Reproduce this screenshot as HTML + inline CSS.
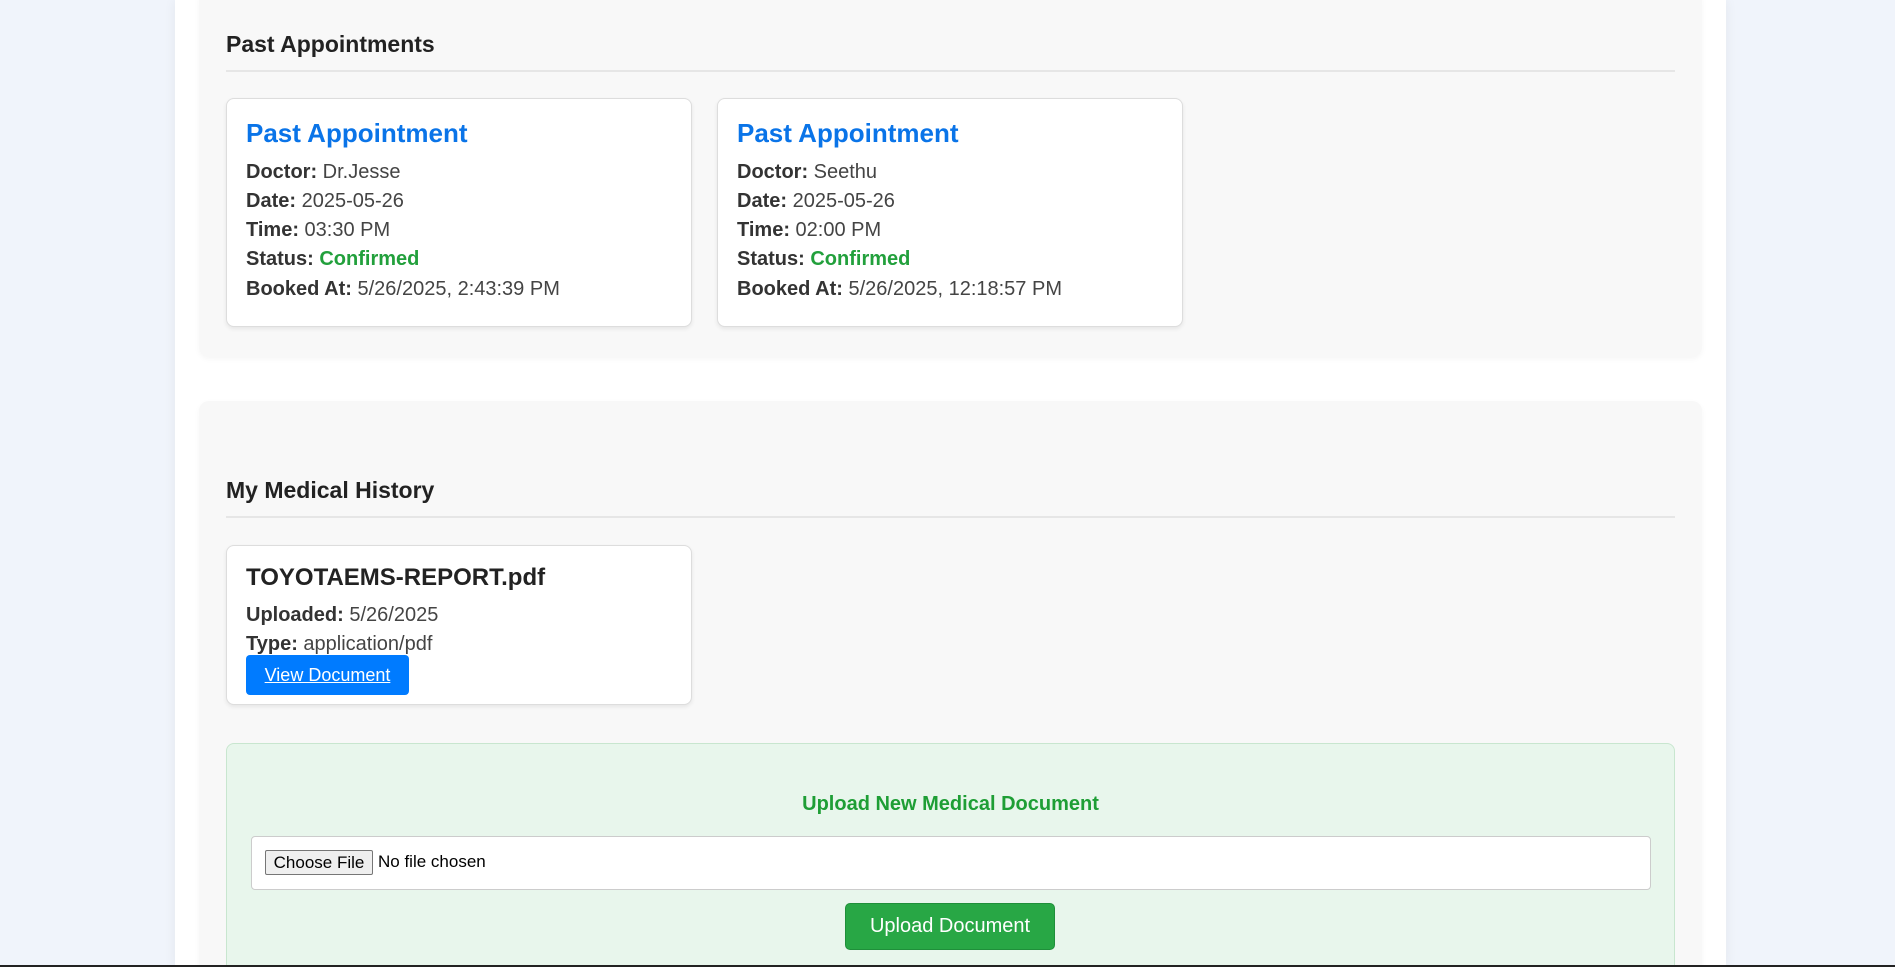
<!DOCTYPE html>
<html style="overflow:hidden"><head><meta charset="utf-8"><style>
*{box-sizing:border-box;margin:0;padding:0}
html,body{width:1895px;height:967px;overflow:hidden}
body{background:#f0f4fb;font-family:"Liberation Sans",Arial,sans-serif}
#w{position:relative;width:1895px;height:967px;overflow:hidden}
.abs{position:absolute}
.container{left:175px;top:0;width:1551px;height:967px;background:#fff;box-shadow:0 0 12px rgba(0,0,0,0.06)}
.panel{left:199px;width:1503px;background:#f8f8f8;border-radius:10px;box-shadow:0 2px 6px rgba(0,0,0,0.04)}
h2{position:absolute;left:226px;font-size:23px;font-weight:bold;color:#222}
.rule{left:226px;width:1449px;height:2px;background:#e6e6e6}
.card{background:#fff;border:1px solid #ddd;border-radius:8px;box-shadow:0 2px 4px rgba(0,0,0,0.08)}
.ct{position:absolute;left:19px;font-size:26px;font-weight:bold;color:#0a74e8}
.ln{position:absolute;left:19px;font-size:20px;color:#444;white-space:nowrap}
.ln b{color:#333}
.g{color:#22a03c;font-weight:bold}
</style></head><body><div id="w">
<div class="abs container"></div>
<div class="abs panel" style="top:-10px;height:367px"></div>
<div class="abs panel" style="top:401px;height:580px"></div>
<h2 style="top:31px">Past Appointments</h2>
<div class="abs rule" style="top:70px"></div>

<div class="abs card" style="left:226px;top:98px;width:466px;height:229px">
<div class="ct" style="top:19px">Past Appointment</div>
<div class="ln" style="top:62px"><b>Doctor:</b> Dr.Jesse</div>
<div class="ln" style="top:91px"><b>Date:</b> 2025-05-26</div>
<div class="ln" style="top:120px"><b>Time:</b> 03:30 PM</div>
<div class="ln" style="top:149px"><b>Status:</b> <span class="g">Confirmed</span></div>
<div class="ln" style="top:179px"><b>Booked At:</b> 5/26/2025, 2:43:39 PM</div>
</div>
<div class="abs card" style="left:717px;top:98px;width:466px;height:229px">
<div class="ct" style="top:19px">Past Appointment</div>
<div class="ln" style="top:62px"><b>Doctor:</b> Seethu</div>
<div class="ln" style="top:91px"><b>Date:</b> 2025-05-26</div>
<div class="ln" style="top:120px"><b>Time:</b> 02:00 PM</div>
<div class="ln" style="top:149px"><b>Status:</b> <span class="g">Confirmed</span></div>
<div class="ln" style="top:179px"><b>Booked At:</b> 5/26/2025, 12:18:57 PM</div>
</div>

<h2 style="top:477px">My Medical History</h2>
<div class="abs rule" style="top:516px"></div>
<div class="abs card" style="left:226px;top:545px;width:466px;height:160px">
<div class="ln" style="top:18px;font-size:24px;font-weight:bold;color:#222">TOYOTAEMS-REPORT.pdf</div>
<div class="ln" style="top:58px"><b>Uploaded:</b> 5/26/2025</div>
<div class="ln" style="top:87px"><b>Type:</b> application/pdf</div>
<div class="abs" style="left:19px;top:109px;width:163px;height:40px;background:#007bff;border-radius:4px;color:#fff;font-size:18px;text-decoration:underline;text-align:center;line-height:40px">View Document</div>
</div>

<div class="abs" style="left:226px;top:743px;width:1449px;height:240px;background:#e8f6ec;border:1px solid #c8e6cf;border-radius:8px"></div>
<div class="abs" style="left:226px;top:793px;width:1449px;text-align:center;font-size:20px;font-weight:bold;color:#1e9e35">Upload New Medical Document</div>
<div class="abs" style="left:251px;top:836px;width:1400px;height:54px;background:#fff;border:1px solid #ccc;border-radius:4px"></div>
<div class="abs" style="left:265px;top:850px;width:108px;height:25px;background:#efefef;border:1px solid #767676;border-radius:2px;font-size:17px;line-height:23px;text-align:center;color:#000">Choose File</div>
<div class="abs" style="left:378px;top:852px;font-size:17px;color:#000">No file chosen</div>
<div class="abs" style="left:845px;top:903px;width:210px;height:47px;background:#28a745;border:1px solid #1f8f3a;border-radius:5px;color:#fff;font-size:20px;text-align:center;line-height:45px">Upload Document</div>
<div class="abs" style="left:0;top:965px;width:1895px;height:2px;background:#222"></div>
</div></body></html>
